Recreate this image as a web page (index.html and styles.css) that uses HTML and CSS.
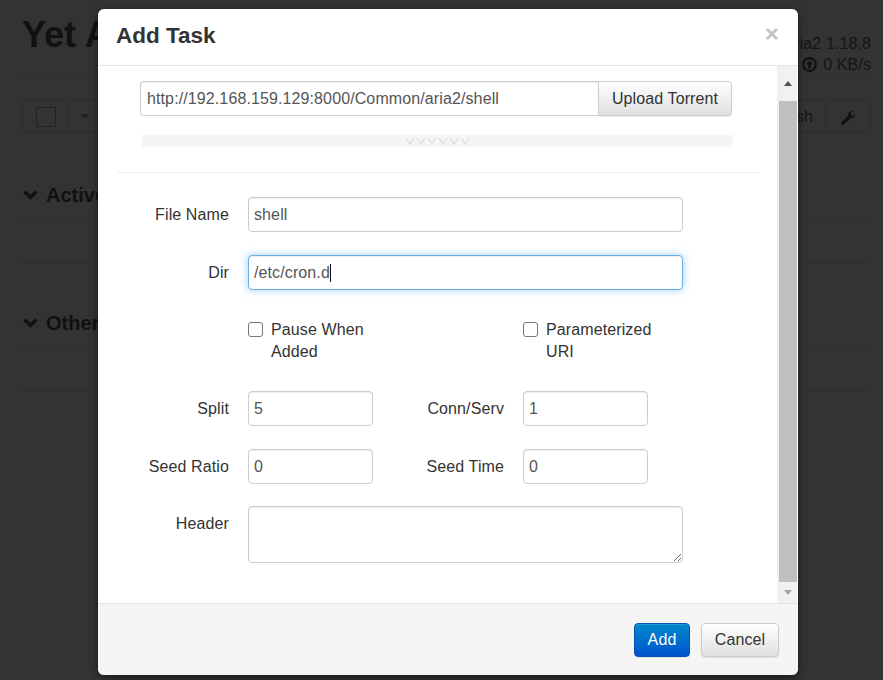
FILE: index.html
```html
<!DOCTYPE html>
<html lang="en">
<head>
<meta charset="utf-8">
<title>Yet Another Aria2 Web Frontend</title>
<link rel="stylesheet" href="styles.css">
</head>
<body>
<div class="page">
  <header class="top">
    <h1 class="brand">Yet Another</h1>
    <div class="stats">
      <div>aria2 1.18.8</div>
      <div class="speed">
        <svg class="up-icon" viewBox="0 0 14 14" width="15" height="15"><circle cx="7" cy="7" r="5.9" fill="none" stroke="#111" stroke-width="2"/><path d="M7 3.2 10.2 7H8.3v3.4H5.7V7H3.8z" fill="#111"/></svg>
        <span>0 KB/s</span>
      </div>
    </div>
  </header>
  <div class="toolbar">
    <div class="tool-group">
      <span class="tool tool-check"><span class="bg-check"></span></span>
      <span class="tool tool-caret"><span class="bg-caret"></span></span>
    </div>
    <div class="tool-group">
      <span class="tool tool-text">Refresh</span>
      <span class="tool tool-wrench">
        <svg viewBox="0 0 16 16" width="16" height="16"><path d="M1.5 13.2 8.2 6.6C7.6 4.3 9.6 1.4 13 1.7L10.6 4.2l.6 2.1 2.1.6 2.2-2.3c.2 3.3-2.6 5.2-5 4.6L3.8 15.4c-.7.6-1.6.6-2.2 0-.7-.6-.8-1.5-.1-2.2z" fill="#111"/></svg>
      </span>
    </div>
  </div>
  <section class="bg-section">
    <h2 class="bg-title"><svg class="chev" viewBox="0 0 14 10" width="15" height="11"><path d="M1.6 2.4 7 7.6l5.4-5.2" fill="none" stroke="#111" stroke-width="3.2"/></svg>Active</h2>
    <div class="bg-empty"></div>
  </section>
  <section class="bg-section">
    <h2 class="bg-title"><svg class="chev" viewBox="0 0 14 10" width="15" height="11"><path d="M1.6 2.4 7 7.6l5.4-5.2" fill="none" stroke="#111" stroke-width="3.2"/></svg>Other</h2>
    <div class="bg-empty"></div>
  </section>
</div>

<div class="modal">
  <div class="modal-header">
    <h3 class="modal-title">Add Task</h3>
    <span class="close">×</span>
  </div>
  <div class="modal-body">
    <div class="scroll-content">
      <div class="uri-row">
        <input class="form-input uri-input" type="text" value="http://192.168.159.129:8000/Common/aria2/shell">
        <button class="btn upload-btn" type="button">Upload Torrent</button>
      </div>
      <div class="grip">
        <svg viewBox="0 0 66 12" width="66" height="12"><path d="M1 3l4 6 4-6M12 3l4 6 4-6M23 3l4 6 4-6M34 3l4 6 4-6M45 3l4 6 4-6M56 3l4 6 4-6" fill="none" stroke="#dcdcdc" stroke-width="1.2"/></svg>
      </div>
      <hr class="divider">
      <div class="form-row">
        <label class="label">File Name</label>
        <input class="form-input wide" type="text" value="shell">
      </div>
      <div class="form-row">
        <label class="label">Dir</label>
        <div class="form-input wide focused">/etc/cron.d<span class="caret"></span></div>
      </div>
      <div class="check-row">
        <label class="check"><span class="box"></span><span>Pause When<br>Added</span></label>
        <label class="check"><span class="box"></span><span>Parameterized<br>URI</span></label>
      </div>
      <div class="form-row">
        <label class="label">Split</label>
        <input class="form-input short" type="text" value="5">
        <label class="label label-second">Conn/Serv</label>
        <input class="form-input short" type="text" value="1">
      </div>
      <div class="form-row seed-row">
        <label class="label">Seed Ratio</label>
        <input class="form-input short" type="text" value="0">
        <label class="label label-second">Seed Time</label>
        <input class="form-input short" type="text" value="0">
      </div>
      <div class="form-row header-row">
        <label class="label">Header</label>
        <textarea class="form-input wide area"></textarea>
      </div>
    </div>
    <div class="scrollbar">
      <span class="arrow arrow-up"></span>
      <span class="thumb"></span>
      <span class="arrow arrow-down"></span>
    </div>
  </div>
  <div class="modal-footer">
    <button class="btn btn-primary" type="button">Add</button>
    <button class="btn btn-cancel" type="button">Cancel</button>
  </div>
</div>
</body>
</html>
```
FILE: styles.css
```css
* { box-sizing: border-box; }
html, body { margin: 0; height: 680px; overflow: hidden; }
body {
  background: #333;
  color: #111;
  font-family: "Liberation Sans", Arial, sans-serif;
  font-size: 16px;
  position: relative;
}
.page { padding: 0 12px 0 22px; }
.top {
  display: flex;
  justify-content: space-between;
  height: 76px;
  border-bottom: 1px solid #2d2d2d;
}
.brand { margin: 14px 0 0; font-size: 36px; line-height: 42px; font-weight: 700; color: #111; }
.stats { padding-top: 33px; font-size: 16px; line-height: 21px; text-align: right; color: #151515; letter-spacing: .1px; }
.speed { display: flex; justify-content: flex-end; align-items: center; gap: 6px; }
.up-icon { display: block; }
.toolbar { display: flex; justify-content: space-between; margin-top: 24px; height: 33px; }
.tool-group { display: flex; border: 1px solid #2c2c2c; border-radius: 4px; }
.tool { display: flex; align-items: center; justify-content: center; border-right: 1px solid #2c2c2c; }
.tool:last-child { border-right: 0; }
.tool-check { width: 46px; }
.tool-caret { width: 60px; }
.bg-check { width: 20px; height: 20px; border: 1px solid #222; }
.bg-caret { border: 5px solid transparent; border-top-color: #222; border-bottom: 0; margin-right: 28px; }
.tool-text { width: 130px; color: #151515; justify-content: flex-end; padding-right: 12px; }
.tool-wrench { width: 44px; }
.bg-section { padding-top: 43px; height: 128px; }
.bg-title { margin: 0; height: 43px; padding: 8px 0 0 1px; display: flex; align-items: flex-start; gap: 8px; font-size: 20px; line-height: 23px; font-weight: 700; color: #111; border-bottom: 1px solid #2d2d2d; }
.chev { margin-top: 5px; }
.bg-empty { height: 44px; border-bottom: 1px solid #2d2d2d; }

.modal {
  position: absolute;
  left: 98px;
  top: 9px;
  width: 700px;
  height: 666px;
  display: flex;
  flex-direction: column;
  background: #fff;
  border-radius: 6px;
  box-shadow: 0 3px 9px rgba(0,0,0,.5);
  color: #333;
  letter-spacing: .11px;
}
.modal-header {
  height: 57px;
  flex: none;
  padding: 0 19px;
  border-bottom: 1px solid #e5e5e5;
  display: flex;
  justify-content: space-between;
}
.modal-title { margin: 12px 0 0 -1px; font-size: 22.5px; line-height: 30px; font-weight: 700; color: #333; letter-spacing: 0; }
.close { margin: 10px 0 0; font-size: 24px; line-height: 30px; font-weight: 700; color: #c4c4c4; }
.modal-body { flex: 1; min-height: 0; display: flex; }
.scroll-content { flex: 1; padding: 15px 19px 0 19px; min-width: 0; }
.scrollbar {
  flex: none;
  width: 20px;
  margin-right: 1px;
  background: #f1f1f1;
  padding-left: 2px;
  display: flex;
  flex-direction: column;
  align-items: stretch;
}
.arrow { flex: none; display: flex; align-items: center; justify-content: center; }
.arrow-up { height: 35px; }
.arrow-up::before { content: ""; border: 4.5px solid transparent; border-bottom: 5px solid #505050; border-top: 0; }
.arrow-down { height: 21px; }
.arrow-down::before { content: ""; border: 4.5px solid transparent; border-top: 5px solid #a3a3a3; border-bottom: 0; }
.thumb { flex: 1; background: #bfbfbf; }

.form-input {
  height: 35px;
  border: 1px solid #ccc;
  border-radius: 4px;
  background: #fff;
  color: #555;
  font: 16px/33px "Liberation Sans", Arial, sans-serif;
  letter-spacing: .11px;
  padding: 0 5px;
  box-shadow: inset 0 1px 1px rgba(0,0,0,.075);
  outline: 0;
  display: block;
}
.uri-row { display: flex; margin-left: 23px; width: 592px; }
.uri-input { flex: 1; min-width: 0; border-radius: 4px 0 0 4px; border-right: 0; padding-left: 6px; }
.btn {
  font: 16px "Liberation Sans", Arial, sans-serif;
  letter-spacing: .11px;
  border-radius: 4px;
  height: 35px;
  border: 1px solid #ccc;
  background: linear-gradient(#fff, #e0e0e0);
  color: #333;
  padding: 0;
  box-shadow: inset 0 1px 0 rgba(255,255,255,.15), 0 1px 1px rgba(0,0,0,.075);
}
.upload-btn { width: 134px; flex: none; border-radius: 0 4px 4px 0; }
.grip {
  margin: 19px 0 0 25px;
  width: 591px;
  height: 12px;
  background: #f5f5f5;
  display: flex;
  justify-content: center;
  overflow: hidden;
}
.divider { margin: 25px 0 24px; border: 0; border-top: 1px solid #eee; height: 0; }
.form-row { display: flex; align-items: flex-start; margin-bottom: 23px; }
.label { width: 112px; flex: none; text-align: right; line-height: 35px; color: #333; }
.wide { margin-left: 19px; width: 435px; }
.focused {
  border-color: #66afe9;
  box-shadow: inset 0 1px 1px rgba(0,0,0,.075), 0 0 8px rgba(102,175,233,.6);
}
.caret { display: inline-block; width: 1px; height: 18px; background: #111; vertical-align: -4px; }
.check-row { display: flex; padding-top: 6px; margin: 0 0 28px 131px; line-height: 22px; color: #333; }
.check { width: 275px; flex: none; display: flex; gap: 8px; }
.box { width: 15px; height: 15px; margin-top: 3px; flex: none; border: 1px solid #767676; border-radius: 3px; background: #fff; }
.short { margin-left: 19px; width: 125px; }
.label-second { width: 131px; }
.seed-row { margin-bottom: 22px; }
.header-row { margin-bottom: 0; }
.area { height: 57px; resize: vertical; }

.modal-footer {
  height: 72px;
  flex: none;
  background: #f5f5f5;
  border-top: 1px solid #e5e5e5;
  border-radius: 0 0 6px 6px;
  display: flex;
  justify-content: flex-end;
  gap: 11px;
  padding: 19px 19px 0 0;
}
.btn-primary {
  width: 56px;
  height: 34px;
  color: #fff;
  border-color: #0055b3;
  background: linear-gradient(#0088cc, #0055cc);
}
.btn-cancel { width: 78px; height: 34px; }
```
